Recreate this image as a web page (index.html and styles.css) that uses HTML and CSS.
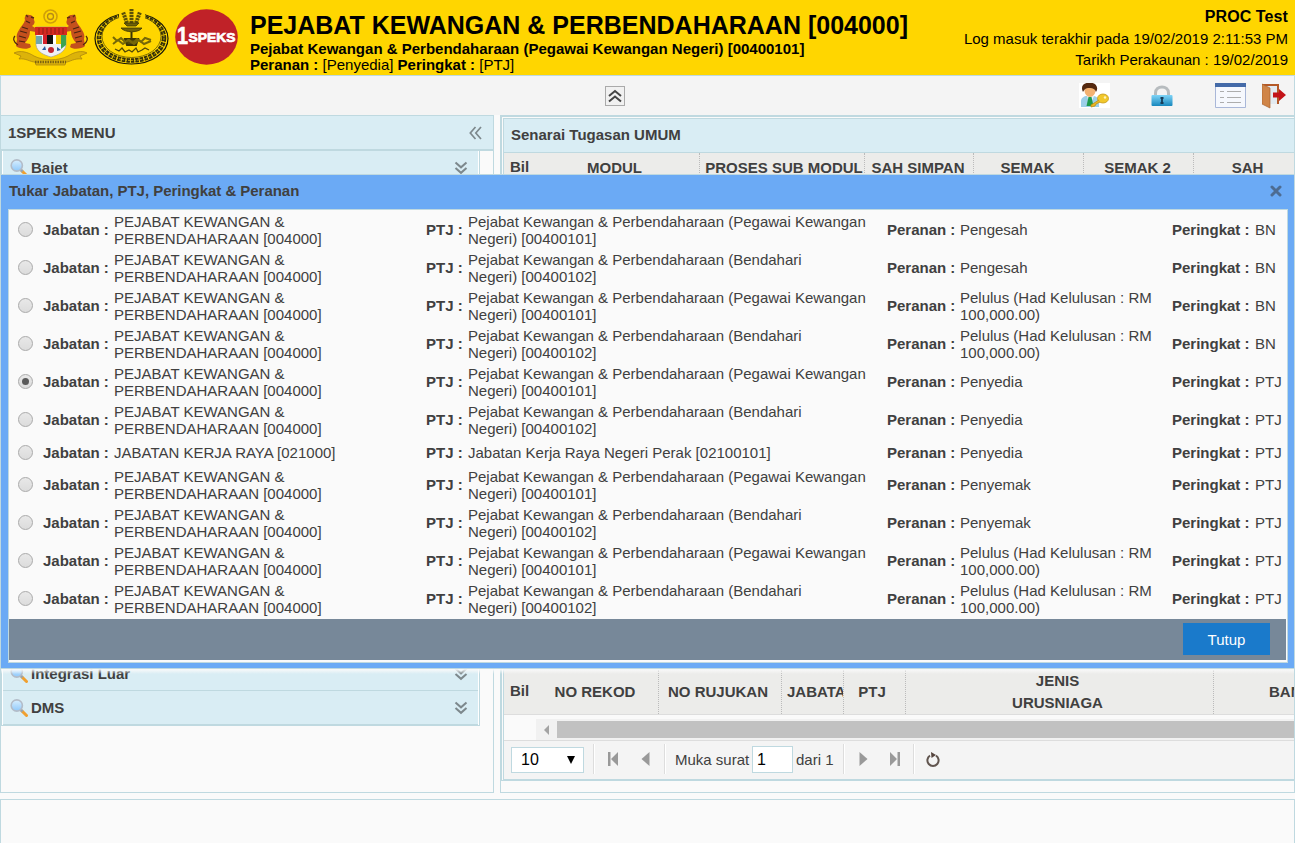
FILE: index.html
```html
<!DOCTYPE html>
<html lang="ms">
<head>
<meta charset="utf-8">
<title>1SPEKS</title>
<link rel="stylesheet" href="styles.css">
</head>
<body>
<svg class="defs" width="0" height="0">
  <defs>
    <linearGradient id="lens" x1="0" y1="0" x2="0" y2="1"><stop offset="0" stop-color="#d8efff"/><stop offset="1" stop-color="#8fc8fa"/></linearGradient>
    <linearGradient id="lockg" x1="0" y1="0" x2="0" y2="1"><stop offset="0" stop-color="#7fd4f7"/><stop offset="1" stop-color="#1787bd"/></linearGradient>
    <symbol id="search" viewBox="0 0 18 18"><path d="M12 12l4.500 4.500" stroke="#f0a030" stroke-width="3" stroke-linecap="round"/><path d="M10.500 10.500l2 2" stroke="#9aa3ad" stroke-width="2.500"/><circle cx="6.800" cy="6.500" r="5.600" fill="url(#lens)" stroke="#b3bcc8" stroke-width="1.600"/></symbol>
    <symbol id="down" viewBox="0 0 14 14"><path d="M1.500 1.500L7 6.300l5.500-4.800M1.500 7L7 11.800 12.500 7" fill="none" stroke="#7d888c" stroke-width="2"/></symbol>
    <g id="tiger"><path d="M21 11c0-3-2-5-5-5-3-1-5 2-4 5-1 4-4 6-6 10-2 3-3 6-2 9l-1 7c3 3 12 4 15 1l-1-3-5-1c3-4 5-7 5-12l6 1 1-3-5-3c3-2 3-4 2-6z" fill="#c4501d"/><path d="M5 36c-5-3-5-7-3-9M13 12l4 2M9 18l6 2M7 22l7 2M6 27l7 2M6 32l6 1" fill="none" stroke="#4b2410" stroke-width="1.200"/><path d="M13 6l2 2M18 8l3 1" stroke="#5b2a12" stroke-width="1.500"/></g>
  </defs>
</svg>
<div class="page">
  <header class="top">
    <div class="logos">
      <svg width="76" height="58" viewBox="0 0 76 58">
        <circle cx="37.500" cy="7.500" r="6.500" fill="none" stroke="#cf9f0a" stroke-width="1.600"/><circle cx="37.500" cy="7.500" r="3" fill="none" stroke="#b58a18" stroke-width="1.300"/>
        <use href="#tiger"/><use href="#tiger" transform="translate(75 0) scale(-1 1)"/>
        <path d="M1 44c6-3 14-1 20 3 10 5 24 5 34 0 6-4 14-6 19-3l-7 3 2 3c-8-1-12 3-16 3l-1 3H23l-1-3c-5 0-9-4-16-3l2-3z" fill="#dcb30a" stroke="#a5800e" stroke-width=".7"/><path d="M22 53h31" fill="none" stroke="#7d6410" stroke-width="2.500" stroke-dasharray="1.500 1"/>
        <path d="M23 18h30v18c-1 7-8 10-15 12-7-2-14-5-15-12z" fill="#eef0f5" stroke="#999" stroke-width=".6"/>
        <path d="M22 18h32v8H22z" fill="#d52a20"/><path d="M26 19v6M30 19v6M34 19v6M38 19v6M42 19v6M46 19v6M50 19v6" stroke="#8d2016"/>
        <path d="M30 26h4v9h-4z" fill="#d3202a"/><path d="M34 26h6v9h-6z" fill="#111"/><path d="M40 26h3v9h-3z" fill="#fff"/><path d="M43 26h5v9h-5z" fill="#f4c900"/><path d="M48 26h5v10l-5 4z" fill="#3aa352"/><path d="M23 27h6v8h-6z" fill="#6fa8ad"/>
        <circle cx="38" cy="41" r="3" fill="#c12531"/><path d="M29 41l3-4 1 4zM44 38l4 3-4 1z" fill="#285aa0"/>
      </svg>
      <svg width="76" height="58" viewBox="0 0 76 58">
        <ellipse cx="37.500" cy="29.500" rx="36.500" ry="25.500" fill="none" stroke="#16160a" stroke-width="1.200"/>
        <ellipse cx="37.500" cy="29" rx="32.500" ry="22.500" fill="none" stroke="#34300a" stroke-width="4.500" stroke-dasharray="3.600 .9"/>
        <ellipse cx="37.500" cy="29" rx="32.500" ry="22.500" fill="none" stroke="#ffd600" stroke-width=".7" stroke-dasharray="2 1"/>
        <ellipse cx="37.500" cy="27.500" rx="29.500" ry="21" fill="#ffd600" stroke="#4a4407" stroke-width=".7"/>
        <path d="M25 1h26v12H25z" fill="#ffd600"/>
        <path d="M37.500 17V0M33 14L29 3M42 14l4-11" stroke="#5b5008" stroke-width="4" stroke-dasharray="2.200 .8"/>
        <path d="M30 14h15l-3 3H33zM27 19h21c-3 5-17 5-21 0z" fill="#706208" stroke="#3b3504" stroke-width=".8"/><path d="M37.500 23v8M31 30h13l-2 6h-9z" fill="#514907" stroke="#3b3504" stroke-width="2"/>
        <path d="M19 28l4 4 4-3 4 4 4-2 4 3 4-4 4 3 4-4 6 2M19 35l5-4 5 4 5-4 6 4 5-4 5 4 7-3" fill="none" stroke="#756708" stroke-width="2"/>
        <path d="M21 40l4 2 3-3 3 4 4-2 3 2 4-4 2 4 4-2 3-2 4 2" fill="none" stroke="#514807" stroke-width="1.300"/>
      </svg>
      <svg width="63" height="58" viewBox="0 0 63 58"><ellipse cx="31.500" cy="28" rx="31.300" ry="27.700" fill="#c02228"/><text class="brand" x="2" y="35" font-size="24" textLength="11" lengthAdjust="spacingAndGlyphs">1</text><text class="brand" x="13.500" y="33" font-size="13.500" textLength="47" lengthAdjust="spacingAndGlyphs">SPEKS</text></svg>
    </div>
    <div class="office">
      <h1>PEJABAT KEWANGAN &amp; PERBENDAHARAAN [004000]</h1>
      <b class="unit">Pejabat Kewangan &amp; Perbendaharaan (Pegawai Kewangan Negeri) [00400101]</b>
      <p><b>Peranan :</b> [Penyedia] <b>Peringkat :</b> [PTJ]</p>
    </div>
    <div class="login"><b>PROC Test</b><span>Log masuk terakhir pada 19/02/2019 2:11:53 PM</span><span>Tarikh Perakaunan : 19/02/2019</span></div>
  </header>
  <div class="tools">
    <button class="fold"><svg width="14" height="14" viewBox="0 0 14 14"><path d="M1 7l6-5 6 5M1 12.500l6-5 6 5" fill="none" stroke="#444" stroke-width="2"/></svg></button>
    <div class="actions">
      <svg class="user" width="31" height="25" viewBox="0 0 31 25"><path fill="#fff" d="M0 0h31v25H0z"/><path d="M2 24v-6c0-3 3-5 6-5h5c4 0 7 2 7 5v6z" fill="#9ccfe9"/><path d="M8 13l3 10 4-10z" fill="#e8f5f8"/><path d="M9.500 14l-2 9h7l-2-9z" fill="#1e9a4c"/><ellipse cx="11" cy="7.500" rx="5.500" ry="6.500" fill="#f3b272"/><path d="M4 9C1 3 5-1 11 0c6-1 9 5 6 9-1-3-3-4-6-4S6 5 4 9z" fill="#54280f"/><ellipse cx="24" cy="15.500" rx="5.500" ry="4.500" fill="#f1c72b" stroke="#c59a1c" stroke-width=".8"/><circle cx="26" cy="14.500" r="1.200" fill="#fff3ba"/><path d="M20 17l-8 5v2l4-1 1-2 4-2" fill="#eab923" stroke="#c08e10" stroke-width=".8"/></svg>
      <svg class="lock" width="22" height="22" viewBox="0 0 22 22"><path d="M4.500 10V8c0-8 13-8 13 0v2" fill="none" stroke="#b7bcbf" stroke-width="3"/><rect x=".5" y="10" width="21" height="11" rx="1" fill="url(#lockg)"/><path d="M9.500 13h3M9.500 18h3M11 13v5" stroke="#173c58" stroke-width="1.800"/></svg>
      <svg class="list" width="31" height="25" viewBox="0 0 31 25"><path d="M.5.500h30v24H.5z" fill="#f6f8fd" stroke="#a9b7d8"/><path d="M0 0h31v4H0z" fill="#446aa8"/><path d="M5 8.500h4M12 8.500h14M5 14.500h4M12 14.500h14M5 19.500h4M12 19.500h14" stroke="#adadad"/></svg>
      <svg class="exit" width="24" height="26" viewBox="0 0 24 26"><path d="M0 1h17v20H0z" fill="#b45927"/><path d="M2 3h13v18H2z" fill="#e3eaf0"/><path d="M0 1l8 4v20l-8-4z" fill="#d08548" stroke="#a9622e" stroke-width=".7"/><path d="M11 9.500h6V6l7 6-7 6v-3.500h-6z" fill="#c31318"/></svg>
    </div>
  </div>
  <main>
    <aside class="menu">
      <div class="menu-head"><span>1SPEKS MENU</span><svg width="13" height="14" viewBox="0 0 13 14"><path d="M6.500 1L1.300 7l5.200 6M12 1L6.800 7l5.200 6" fill="none" stroke="#7d888c" stroke-width="1.700"/></svg></div>
      <div class="accordion">
        <div class="item"><svg class="mag"><use href="#search"/></svg><span>Bajet</span><svg class="chev"><use href="#down"/></svg></div>
        <div class="last">
          <div class="item"><svg class="mag"><use href="#search"/></svg><span>Integrasi Luar</span><svg class="chev"><use href="#down"/></svg></div>
          <div class="item"><svg class="mag"><use href="#search"/></svg><span>DMS</span><svg class="chev"><use href="#down"/></svg></div>
        </div>
      </div>
    </aside>
    <section class="tasks">
      <div class="grid-box">
        <div>
          <div class="grid-title">Senarai Tugasan UMUM</div>
          <div class="cols cols-a"><b class="bil">Bil</b><b>MODUL</b><b class="sub">PROSES SUB MODUL</b><b>SAH SIMPAN</b><b>SEMAK</b><b>SEMAK 2</b><b>SAH</b></div>
        </div>
        <div>
          <div class="cols cols-b"><b class="bil">Bil</b><b>NO REKOD</b><b>NO RUJUKAN</b><b class="cut">JABATAN</b><b>PTJ</b><b>JENIS<br>URUSNIAGA</b><b class="bank">BANK</b></div>
          <div class="scroll"><div class="track"><i></i><div class="thumb"></div></div></div>
          <div class="pager">
            <div class="select"><span>10</span><svg width="8" height="9" viewBox="0 0 8 9"><path d="M0 1h8L4 9z"/></svg></div>
            <div class="sep"></div>
            <svg class="nav" width="12" height="14" viewBox="0 0 12 14"><path d="M1 0h2.500v14H1zM11 0v14L4 7z"/></svg>
            <svg class="nav prev" width="9" height="14" viewBox="0 0 9 14"><path d="M8.500 0v14L.5 7z"/></svg>
            <div class="sep"></div>
            <span class="pg">Muka surat</span><div class="num">1</div><span class="of">dari 1</span>
            <div class="sep"></div>
            <svg class="nav next" width="9" height="14" viewBox="0 0 9 14"><path d="M.5 0v14l8-7z"/></svg>
            <svg class="nav end" width="12" height="14" viewBox="0 0 12 14"><path d="M8.500 0H11v14H8.500zM1 0v14l7-7z"/></svg>
            <div class="sep"></div>
            <svg class="reload" width="14" height="15" viewBox="0 0 14 15"><path d="M10 3.600A5.600 5.600 0 1 1 4 3.600" fill="none" stroke="#61554f" stroke-width="2"/><path d="M5 0l5 3-4.500 3z" fill="#55443d"/></svg>
          </div>
        </div>
      </div>
    </section>
  </main>
  <div class="bottom"></div>

  <div class="modal">
    <div class="modal-head"><b>Tukar Jabatan, PTJ, Peringkat &amp; Peranan</b><svg width="12" height="12" viewBox="0 0 12 12"><path d="M2 2l8 8M10 2l-8 8" stroke="#4d6c92" stroke-width="3" stroke-linecap="round"/></svg></div>
    <div class="modal-body">
      <div class="rows" id="rows"></div>
      <div class="modal-foot"><button>Tutup</button></div>
    </div>
  </div>
</div>
<script src="rows.js"></script>
</body>
</html>
```
FILE: styles.css
```css
* { box-sizing: border-box; }
body { margin: 0; background: #fafafa; color: #404040; font: 15px/17px "Liberation Sans", Arial, sans-serif; overflow: hidden; }
.defs { position: absolute; }
svg { display: block; flex: none; }
button { font: inherit; padding: 0; }
.page { position: relative; width: 1295px; height: 843px; display: flex; flex-direction: column; overflow: hidden; }

.top { height: 75px; flex: none; background: #ffd600; color: #000; display: flex; }
.logos { display: flex; padding: 9px 0 0 13px; gap: 5px; width: 250px; flex: none; }
.brand { font-family: "Liberation Sans", sans-serif; font-weight: bold; fill: #fff; stroke: #fff; stroke-width: .7px; }
.office { flex: 1; padding-top: 10px; white-space: nowrap; }
h1 { margin: 0; font-size: 25px; line-height: 30px; }
.unit { display: block; line-height: 17px; }
.office p { margin: 0; line-height: 15px; }
.login { display: flex; flex-direction: column; text-align: right; padding: 6px 7px 0 0; line-height: 21.500px; white-space: nowrap; }
.login b { font-size: 16px; letter-spacing: .1px; }

.tools { height: 40px; flex: none; background: #f4f4f4; border: 1px solid #bfd9e0; border-bottom: 0; display: flex; justify-content: space-between; }
.fold { width: 20px; height: 20px; margin: 10px 0 0 604px; border: 1px solid #aaa; background: #f1f1f1; display: flex; align-items: center; justify-content: center; }
.actions { display: flex; padding-right: 8px; }
.user { margin: 7px 41px 0 0; }
.lock { margin: 9px 42px 0 0; }
.list { margin: 7px 16px 0 0; }
.exit { margin-top: 7px; }

main { height: 678px; flex: none; display: flex; gap: 6px; }
.menu { width: 494px; flex: none; border: 1px solid #bfd9e0; }
.menu-head { height: 35px; border-bottom: 2px solid #bfd9e0; background: #d9edf4; font-weight: bold; display: flex; justify-content: space-between; align-items: center; padding: 0 11px 0 7px; }
.accordion { width: 479px; height: 575px; border: 1px solid #bfd9e0; border-top: 0; display: flex; flex-direction: column; justify-content: space-between; box-shadow: inset 1px 0 #fff, inset -1px 0 #fff; }
.item { height: 34px; margin: 0 1px; background: #d9edf4; border-bottom: 1px solid #bfd9e0; display: flex; align-items: center; font-weight: bold; padding: 0 10px 0 7px; }
.mag { width: 18px; height: 18px; margin: 0 3px 0 0; }
.chev { width: 14px; height: 14px; margin-left: auto; }
.item span { white-space: nowrap; }

.tasks { flex: 1; min-width: 0; border: 1px solid #bfd9e0; overflow: hidden; }
.grid-box { height: 665px; border: 1px solid #bfd9e0; border-right: 0; padding: 1px 0 0 1px; display: flex; flex-direction: column; justify-content: space-between; }
.grid-box > div { border: 1px solid #bfd9e0; border-right: 0; overflow: hidden; }
.grid-title { height: 34px; background: #d9edf4; border-bottom: 1px solid #bfd9e0; font-weight: bold; line-height: 32px; padding-left: 7px; }
.cols { display: grid; background: #ececea; overflow: hidden; }
.cols b { display: flex; align-items: center; justify-content: center; text-align: center; border-right: 1px dotted #bbb; padding-right: 2px; white-space: nowrap; line-height: 22px; overflow: hidden; }
.cols .bil { border: 0; justify-content: flex-start; padding: 0 0 2px 6px; }
.cols-a { height: 30px; grid-template-columns: 28px 168px 165px 109px 110px 110px 110px; }
.cols .sub { padding: 0 0 0 4px; }
.cols-b { height: 45px; border-bottom: 1px solid #ddd; grid-template-columns: 28px 127px 123px 62px 62px 308px 156px; }
.cols-b b:nth-child(2) { padding: 0; }
.cols-b b:nth-child(3), .cols-b b:nth-child(6) { padding-right: 4px; }
.cols .cut { justify-content: flex-start; padding: 0 0 0 5px; }
.cols-b b:nth-child(5) { padding-right: 5px; }
.cols .bank { justify-content: flex-start; padding-left: 55px; border: 0; }
.scroll { height: 26px; padding: 4px 0 0 32px; border-bottom: 1px solid #ddd; }
.track { height: 21px; background: #f1f1f1; display: flex; align-items: center; padding-left: 8px; }
.track i { border: 5px solid transparent; border-right-color: #a3a3a3; border-left: 0; margin-right: 8px; }
.thumb { height: 17px; flex: 1; background: #c1c1c1; }
.pager { height: 38px; background: #f4f4f4; display: flex; align-items: center; padding: 0 0 2px 7px; }
.select { width: 73px; height: 26px; margin-top: 2px; border: 1px solid #bfd9e0; background: #fff; color: #000; display: flex; align-items: center; justify-content: space-between; padding: 0 8px 2px 9px; font-size: 16px; }
.sep { width: 2px; height: 30px; border-left: 1px solid #ddd; background: #fff; }
.select + .sep { margin: 0 12px 0 9px; }
.nav { fill: #999; }
.prev { margin: 0 14px 0 22px; }
.pg { margin-left: 9px; width: 77px; white-space: nowrap; }
.num { width: 41px; height: 27px; border: 1px solid #bfd9e0; background: #fff; color: #000; line-height: 25px; padding-left: 4px; font-size: 16px; }
.of { margin: 0 9px 0 3px; width: 38px; white-space: nowrap; }
.next { margin: 0 21px 0 14px; }
.end { margin-right: 12px; }
.reload { margin-left: 11px; }
.bottom { flex: 1; margin-top: 6px; border: 1px solid #bfd9e0; border-bottom: 0; }

.modal { position: absolute; left: 0; top: 174px; width: 1295px; height: 495px; border: 1px solid #bfd9e0; background: #6baaf5; padding: 0 6px 5px 7px; }
.modal::after { content: ""; position: absolute; left: 0; right: 0; top: 494px; height: 5px; background: linear-gradient(#fafafa, #fafafa00); }
.modal-head { height: 34px; display: flex; align-items: center; justify-content: space-between; padding: 0 6px 2px 1px; }
.modal-head b { padding-bottom: 1px; letter-spacing: -.03px; }
.modal-body { height: 454px; background: #fafafa; border: 1px solid #bfd9e0; padding-top: 1px; }
.rows { height: 408px; }
.row { display: grid; grid-template-columns: 34px 71px 312px 42px 419px 73px 212px 83px 30px; align-items: center; padding: 2px 0; min-height: 27px; white-space: nowrap; }
.row.tall b, .row.tall .radio, .row.tall .short { margin-bottom: 2px; }
.radio { width: 15px; height: 15px; margin-left: 9px; border: 1px solid #aaa; border-radius: 50%; background: linear-gradient(#e8e8e8, #dcdcdc); display: flex; align-items: center; justify-content: center; }
.radio.on::after { content: ""; width: 7px; height: 7px; border-radius: 50%; background: #5a5a5a; }
.modal-foot { height: 41px; margin-right: 1px; background: #778899; display: flex; justify-content: flex-end; align-items: flex-start; padding: 4px 16px 0 0; }
.modal-foot button { width: 87px; height: 32px; border: 0; background: #1a7acb; color: #fff; }
```
FILE: rows.js
```javascript
const office = 'PEJABAT KEWANGAN &amp;<br>PERBENDAHARAAN [004000]';
const a = 'Pejabat Kewangan &amp; Perbendaharaan (Pegawai Kewangan<br>Negeri) [00400101]';
const b = 'Pejabat Kewangan &amp; Perbendaharaan (Bendahari<br>Negeri) [00400102]';
const limit = 'Pelulus (Had Kelulusan : RM<br>100,000.00)';
const data = [
  [office, a, 'Pengesah', 'BN'],
  [office, b, 'Pengesah', 'BN'],
  [office, a, limit, 'BN'],
  [office, b, limit, 'BN'],
  [office, a, 'Penyedia', 'PTJ', true],
  [office, b, 'Penyedia', 'PTJ'],
  ['JABATAN KERJA RAYA [021000]', 'Jabatan Kerja Raya Negeri Perak [02100101]', 'Penyedia', 'PTJ'],
  [office, a, 'Penyemak', 'PTJ'],
  [office, b, 'Penyemak', 'PTJ'],
  [office, a, limit, 'PTJ'],
  [office, b, limit, 'PTJ']
];
const cell = text => `<span${text.includes('<br>') ? '' : ' class="short"'}>${text}</span>`;
document.getElementById('rows').innerHTML = data.map(r =>
  `<div class="row${r[0] === office ? ' tall' : ''}"><div class="radio${r[4] ? ' on' : ''}"></div><b>Jabatan :</b>${cell(r[0])}<b>PTJ :</b>${cell(r[1])}<b>Peranan :</b>${cell(r[2])}<b>Peringkat :</b>${cell(r[3])}</div>`
).join('');
```
